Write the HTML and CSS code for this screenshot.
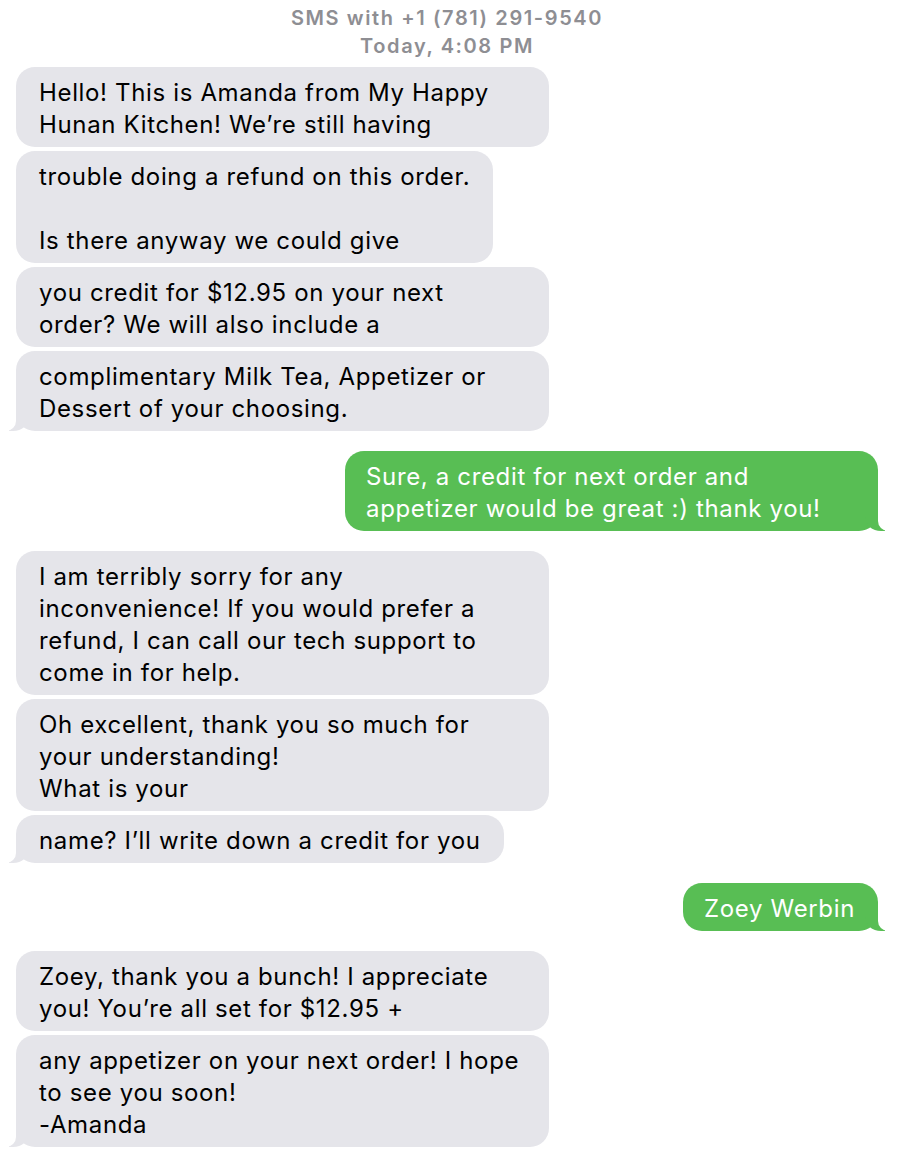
FILE: index.html
```html
<!DOCTYPE html>
<html lang="en">
<head>
<meta charset="utf-8">
<title>SMS with +1 (781) 291-9540</title>
<link rel="stylesheet" href="styles.css">
</head>
<body>
<div class="thread">
  <header class="head">
    <div>SMS with +1 (781) 291-9540</div>
    <div>Today, 4:08 PM</div>
  </header>

  <div class="group">
    <div class="bubble in">Hello! This is Amanda from My Happy Hunan Kitchen! We’re still having</div>
    <div class="bubble in">trouble doing a refund on this order.<br><br>Is there anyway we could give</div>
    <div class="bubble in">you credit for $12.95 on your next order? We will also include a</div>
    <div class="bubble in tail">complimentary Milk Tea, Appetizer or Dessert of your choosing.</div>
  </div>

  <div class="group out-group">
    <div class="bubble out tail">Sure, a credit for next order and appetizer would be great :) thank you!</div>
  </div>

  <div class="group">
    <div class="bubble in">I am terribly sorry for any inconvenience! If you would prefer a refund, I can call our tech support to come in for help.</div>
    <div class="bubble in">Oh excellent, thank you so much for your understanding!<br>What is your</div>
    <div class="bubble in tail">name? I’ll write down a credit for you</div>
  </div>

  <div class="group out-group">
    <div class="bubble out tail">Zoey Werbin</div>
  </div>

  <div class="group">
    <div class="bubble in">Zoey, thank you a bunch! I appreciate you! You’re all set for $12.95 +</div>
    <div class="bubble in tail">any appetizer on your next order! I hope to see you soon!<br>-Amanda</div>
  </div>
</div>
</body>
</html>
```

FILE: styles.css
```css
html, body {
  margin: 0;
  padding: 0;
  background: #ffffff;
}

body {
  font-family: "Inter", "Liberation Sans", sans-serif;
  -webkit-font-smoothing: antialiased;
}

.thread {
  width: 902px;
  display: flex;
  flex-direction: column;
  gap: 20px;
  padding-bottom: 20px;
}

.head {
  padding-top: 4px;
  margin-bottom: -13px;
  text-align: center;
  color: #8e8e93;
  font-size: 20px;
  line-height: 28px;
  font-weight: 600;
  letter-spacing: 1.6px;
  padding-right: 8px;
}

.group {
  display: flex;
  flex-direction: column;
  align-items: flex-start;
  gap: 4px;
  padding-left: 16px;
}

.out-group {
  align-items: flex-end;
  padding-left: 0;
  padding-right: 24px;
}

.bubble {
  position: relative;
  max-width: 533px;
  box-sizing: border-box;
  padding: 10px 23px 6px 23px;
  border-radius: 19px;
  font-size: 24px;
  line-height: 32px;
  letter-spacing: 0.65px;
}

.in {
  background: #e5e5ea;
  color: #000000;
}

.out {
  background: #58be54;
  color: #ffffff;
  padding-left: 21px;
}

.in.tail::before {
  content: "";
  position: absolute;
  left: -7px;
  bottom: 0;
  width: 20px;
  height: 22px;
  background: #e5e5ea;
  border-bottom-right-radius: 16px 14px;
}

.in.tail::after {
  content: "";
  position: absolute;
  left: -26px;
  bottom: 0;
  width: 26px;
  height: 22px;
  background: #ffffff;
  border-bottom-right-radius: 10px;
}

.out.tail::before {
  content: "";
  position: absolute;
  right: -7px;
  bottom: 0;
  width: 20px;
  height: 22px;
  background: #58be54;
  border-bottom-left-radius: 16px 14px;
}

.out.tail::after {
  content: "";
  position: absolute;
  right: -26px;
  bottom: 0;
  width: 26px;
  height: 22px;
  background: #ffffff;
  border-bottom-left-radius: 10px;
}
```
